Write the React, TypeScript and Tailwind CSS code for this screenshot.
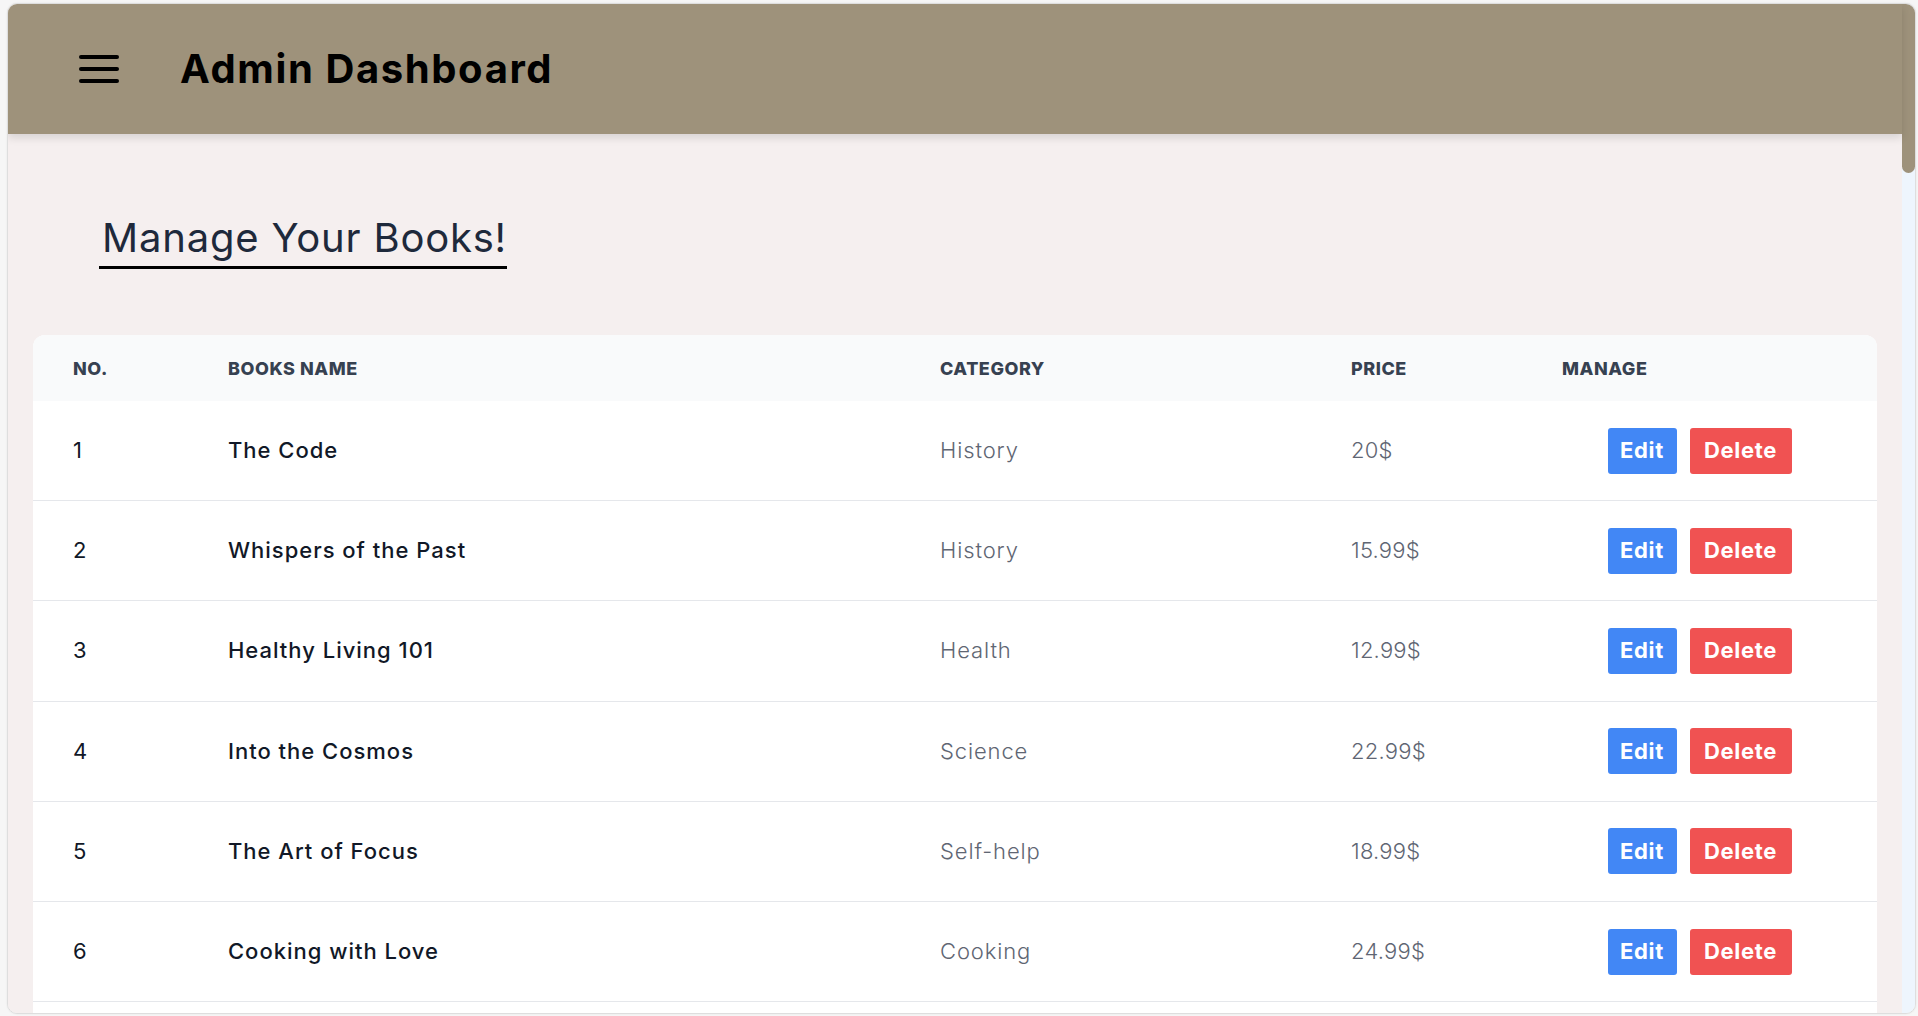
// Admin dashboard — book management table inside a rounded browser frame.

const books = [
  { no: 1, name: 'The Code', category: 'History', price: '20$' },
  { no: 2, name: 'Whispers of the Past', category: 'History', price: '15.99$' },
  { no: 3, name: 'Healthy Living 101', category: 'Health', price: '12.99$' },
  { no: 4, name: 'Into the Cosmos', category: 'Science', price: '22.99$' },
  { no: 5, name: 'The Art of Focus', category: 'Self-help', price: '18.99$' },
  { no: 6, name: 'Cooking with Love', category: 'Cooking', price: '24.99$' },
];

const cols = 'grid grid-cols-[155px_712px_411px_211px_1fr]';

function MenuIcon() {
  return (
    <svg width="40" height="28" viewBox="0 0 40 28" aria-hidden="true">
      <rect x="0" y="0" width="40" height="4" rx="2" fill="#000" />
      <rect x="0" y="12" width="40" height="4" rx="2" fill="#000" />
      <rect x="0" y="24" width="40" height="4" rx="2" fill="#000" />
    </svg>
  );
}

export default function App() {
  return (
    <div className="h-[1016px] w-full overflow-hidden bg-[#f6f6f6] pt-[3px] pl-[7px] pr-[2px] font-['Inter',sans-serif]">
      <div className="flex h-[1011px] overflow-hidden rounded-[10px] border border-[#dedede] shadow-[0_0_2px_rgba(0,0,0,0.08)]">
        <div className="flex flex-1 flex-col bg-[#f5efef]">
          <header className="relative z-10 flex h-[130px] shrink-0 items-center bg-[#9e927b] pl-[71px] shadow-[0_4px_8px_rgba(0,0,0,0.12)]">
            <MenuIcon />
            <h1 className="ml-[61px] text-[40px] font-bold leading-[40px] tracking-[0.04em] text-black">
              Admin Dashboard
            </h1>
          </header>

          <main className="px-[25px]">
            <div className="ml-[66px] mt-[84px]">
              <h2 className="inline-block border-b-[3px] border-black pb-2 pl-[3px] text-[40px] font-normal leading-[40px] tracking-[0.02em] text-[#1e293b]">
                Manage Your Books!
              </h2>
            </div>

            <div className="mt-[66px] overflow-hidden rounded-t-xl bg-white pb-[40px]">
              <div className={`${cols} h-[66px] items-center bg-[#f9fafb] text-[18px] font-extrabold uppercase tracking-[0.03em] text-[#374151]`}>
                <div className="pl-10">No.</div>
                <div className="pl-10">Books Name</div>
                <div className="pl-10">Category</div>
                <div className="pl-10">Price</div>
                <div className="pl-10">Manage</div>
              </div>

              {books.map((b) => (
                <div
                  key={b.no}
                  className={`${cols} h-[100.2px] items-center border-b border-[#e5e7eb] text-[22px]`}
                >
                  <div className="pl-10 text-[#111827]">{b.no}</div>
                  <div className="pl-10 font-[450] tracking-[0.045em] text-[#111827]">{b.name}</div>
                  <div className="pl-10 font-light tracking-[0.04em] text-[#5f6673]">{b.category}</div>
                  <div className="pl-10 font-light tracking-[0.01em] text-[#5f6673]">{b.price}</div>
                  <div className="flex items-center justify-center gap-[13px]">
                    <button className="flex h-[46px] w-[69px] items-center justify-center rounded-[3px] bg-[#4287f5] text-[22px] font-bold tracking-[0.03em] text-white">
                      Edit
                    </button>
                    <button className="flex h-[46px] w-[102px] items-center justify-center rounded-[3px] bg-[#f05252] text-[22px] font-bold tracking-[0.03em] text-white">
                      Delete
                    </button>
                  </div>
                </div>
              ))}
            </div>
          </main>
        </div>

        <div className="w-[13px] shrink-0 bg-[#eef5fd]">
          <div className="h-[169px] rounded-b-full bg-[#9e927b]" />
        </div>
      </div>
    </div>
  );
}
